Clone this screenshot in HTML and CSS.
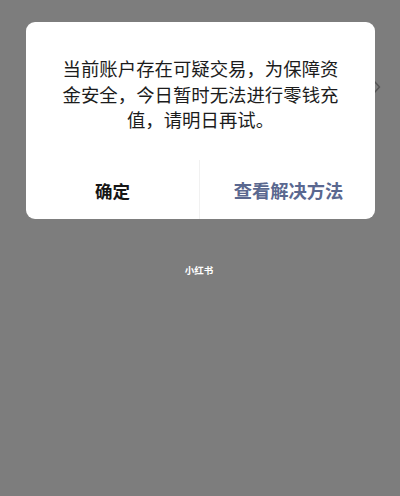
FILE: index.html
```html
<!DOCTYPE html>
<html lang="zh-CN">
<head>
<meta charset="utf-8">
<link rel="stylesheet" href="styles.css">
</head>
<body>
<div class="page">
  <svg class="chevron" width="8" height="14" viewBox="0 0 8 14"><path d="M1.5 1.5 L6.5 7 L1.5 12.5" fill="none" stroke="#555" stroke-width="1.4"/></svg>
  <div class="dialog">
    <p class="message">当前账户存在可疑交易，为保障资金安全，今日暂时无法进行零钱充值，请明日再试。</p>
    <div class="actions">
      <div class="btn btn-ok">确定</div>
      <div class="btn btn-link">查看解决方法</div>
    </div>
  </div>
  <div class="watermark">小红书</div>
</div>
</body>
</html>
```

FILE: styles.css
```css
html, body {
  margin: 0;
  padding: 0;
}
body {
  width: 400px;
  height: 496px;
  background: #7d7d7d;
  font-family: "Noto Sans CJK SC", "Noto Sans", sans-serif;
  overflow: hidden;
}
.page {
  position: relative;
  padding-top: 22px;
  height: 474px;
}
.chevron {
  position: absolute;
  left: 373px;
  top: 80px;
}
.dialog {
  position: relative;
  margin-left: 26px;
  width: 349px;
  background: #fff;
  border-radius: 9px;
  overflow: hidden;
}
.message {
  margin: 0;
  padding: 34px 34px 27px;
  font-size: 18.4px;
  line-height: 25.5px;
  color: #1c1c1c;
  text-align: center;
}
.actions {
  display: flex;
  height: 59px;
}
.btn {
  flex: 1;
  display: flex;
  align-items: center;
  justify-content: center;
  font-size: 17.5px;
  font-weight: 700;
  padding-top: 2px;
}
.btn-ok {
  color: #161616;
  padding-right: 0;
}
.btn-link {
  color: #5a6890;
  border-left: 1px solid #f1f1f1;
  font-size: 18.3px;
  padding-left: 2px;
}
.watermark {
  margin-top: 44px;
  text-align: center;
  color: #fff;
  font-size: 9.5px;
  font-weight: 700;
  line-height: 14px;
  padding-right: 2px;
}
```
